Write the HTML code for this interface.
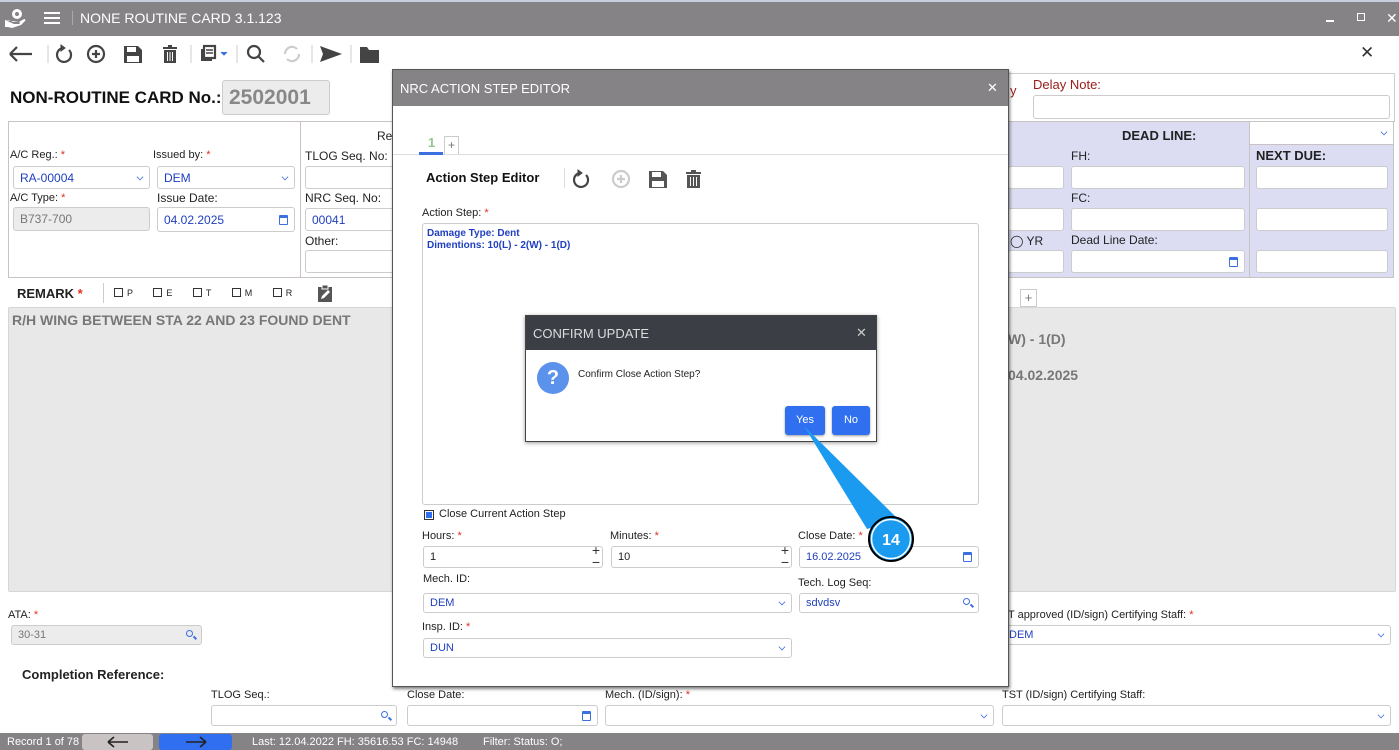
<!DOCTYPE html>
<html><head><meta charset="utf-8">
<style>
*{box-sizing:border-box;margin:0;padding:0}
body{width:1399px;height:750px;overflow:hidden;position:relative;background:#fff;font-family:"Liberation Sans",sans-serif;font-size:12px;color:#222}
.a{position:absolute}
.inp{position:absolute;background:#fff;border:1px solid #ccc;border-radius:3px;font-size:12px;color:#1f3fbf;padding-left:6px;display:flex;align-items:center}
.dis{background:#ececec;color:#777}
.lbl{position:absolute;font-size:12px;color:#222;white-space:nowrap}
.r{color:#e03020}
.chev{position:absolute;right:6px;top:50%;margin-top:-4px;width:6px;height:6px;border-right:1.5px solid #3c6fe0;border-bottom:1.5px solid #3c6fe0;transform:rotate(45deg) scale(.8)}
.cal{position:absolute;right:6px;top:50%;margin-top:-5px;width:9px;height:10px;border:1.5px solid #3c6fe0;border-top-width:3px;border-radius:1px}
.srch{position:absolute;right:8px;top:50%;margin-top:-5px;width:7px;height:7px;border:1.5px solid #3c6fe0;border-radius:50%}
.srch:after{content:"";position:absolute;width:1.5px;height:4px;background:#3c6fe0;right:-3px;bottom:-4px;transform:rotate(-45deg)}
.cb{display:inline-block;width:9px;height:9px;border:1px solid #333;margin-right:4px;vertical-align:-1px}
</style></head><body>

<!-- title bar -->
<div class="a" style="left:0;top:0;width:1399px;height:36px;background:#858385;border-top:2px solid #c8d0e0"></div>
<svg class="a" style="left:4px;top:8px" width="22" height="20" viewBox="0 0 22 20"><circle cx="13" cy="6" r="5" fill="#fff"/><circle cx="13" cy="6" r="2" fill="#858385"/><path d="M1 12h4l4 2h6c1 0 1 2 0 2h-5M1 12v7h3l4 1 9-3 4-4c1-1 0-2-1-2l-5 3" fill="#fff"/></svg>
<div class="a" style="left:44px;top:12px;width:16px;height:2px;background:#fff;box-shadow:0 5px 0 #fff,0 10px 0 #fff"></div>
<div class="a" style="left:72px;top:11px;width:1px;height:14px;background:#aaa"></div>
<div class="a" style="left:80px;top:10px;color:#fff;font-size:14px">NONE ROUTINE CARD 3.1.123</div>
<div class="a" style="left:1326px;top:20px;width:8px;height:2px;background:#fff"></div>
<div class="a" style="left:1357px;top:13px;width:8px;height:8px;border:1.5px solid #fff"></div>
<div class="a" style="left:1386px;top:10px;color:#fff;font-size:14px">✕</div>

<!-- toolbar -->
<svg class="a" style="left:8px;top:42px" width="380" height="24" viewBox="0 0 380 24" fill="none" stroke="#444" stroke-width="2.2">
<path d="M2 12h22M2 12l7-7M2 12l7 7"/>
<line x1="40" y1="3" x2="40" y2="21" stroke="#ccc" stroke-width="1"/>
<path d="M55 6a7 7 0 1 0 6 2" /><path d="M53 3l4 3-4 3z" fill="#444" stroke-width="1"/>
<circle cx="88" cy="12" r="8"/><path d="M84 12h8M88 8v8"/>
<path d="M116 4h14l4 4v13h-18z" fill="#444" stroke="none"/><rect x="119" y="5" width="9" height="5" fill="#fff" stroke="none"/><rect x="119" y="14" width="12" height="6" fill="#fff" stroke="none"/>
<g stroke="none" fill="#444"><rect x="155" y="5" width="14" height="2"/><rect x="160" y="3" width="4" height="2"/><path d="M156 8h12v13h-12z"/></g><path d="M159.5 10v9M162 10v9M164.5 10v9" stroke="#fff" stroke-width="1"/>
<line x1="183" y1="3" x2="183" y2="21" stroke="#ccc" stroke-width="1"/>
<rect x="193" y="7" width="11" height="12" fill="#444" stroke="none"/><rect x="196" y="4" width="11" height="12" fill="#fff"/><path d="M198 8h7M198 11h7" stroke-width="1.5"/>
<path d="M213 10l3 3 3-3" fill="#3c6fe0" stroke="#3c6fe0" stroke-width="1"/>
<line x1="229" y1="3" x2="229" y2="21" stroke="#ccc" stroke-width="1"/>
<circle cx="246" cy="10" r="6"/><path d="M250 14l6 6"/>
<path d="M277 12a7 7 0 0 1 12-5M291 12a7 7 0 0 1-12 5" stroke="#ccc"/>
<line x1="304" y1="3" x2="304" y2="21" stroke="#ccc" stroke-width="1"/>
<path d="M312 4l22 8-22 8 3-8z" fill="#444" stroke="none"/>
<line x1="343" y1="3" x2="343" y2="21" stroke="#ccc" stroke-width="1"/>
<path d="M352 5h7l2 3h10v13h-19z" fill="#444" stroke="none"/>
</svg>
<div class="a" style="left:1360px;top:43px;font-size:17px;color:#333">✕</div>

<!-- card no -->
<div class="a" style="left:10px;top:88px;font-size:17px;font-weight:bold;color:#111">NON-ROUTINE CARD No.: <span class="r">*</span></div>
<div class="inp dis" style="left:222px;top:80px;width:108px;height:35px;font-size:21px;font-weight:bold;color:#888">2502001</div>

<!-- delay note -->
<div class="a" style="left:1008px;top:73px;width:387px;height:49px;border:1px solid #ccc;border-left:none"></div>
<div class="a" style="left:1033px;top:77px;color:#9b1a1a;font-size:13px">Delay Note:</div>
<div class="a" style="left:1010px;top:83px;color:#9b1a1a;font-size:13px">y</div>
<div class="inp" style="left:1033px;top:95px;width:357px;height:24px"></div>

<!-- form box -->
<div class="a" style="left:8px;top:121px;width:1386px;height:157px;border:1px solid #c8c2c2"></div>
<div class="a" style="left:300px;top:122px;width:1px;height:155px;background:#c8c2c2"></div>
<div class="lbl" style="left:10px;top:149px;font-size:11px">A/C Reg.: <span class="r">*</span></div>
<div class="lbl" style="left:153px;top:149px;font-size:11px">Issued by: <span class="r">*</span></div>
<div class="inp" style="left:13px;top:166px;width:137px;height:23px">RA-00004<i class="chev"></i></div>
<div class="inp" style="left:157px;top:166px;width:138px;height:23px">DEM<i class="chev"></i></div>
<div class="lbl" style="left:10px;top:192px;font-size:11px">A/C Type: <span class="r">*</span></div>
<div class="lbl" style="left:157px;top:191px">Issue Date:</div>
<div class="inp dis" style="left:13px;top:207px;width:137px;height:24px">B737-700</div>
<div class="inp" style="left:157px;top:207px;width:138px;height:25px">04.02.2025<i class="cal"></i></div>
<div class="lbl" style="left:377px;top:129px">Re</div>
<div class="lbl" style="left:305px;top:149px">TLOG Seq. No:</div>
<div class="inp" style="left:305px;top:166px;width:90px;height:23px"></div>
<div class="lbl" style="left:305px;top:191px">NRC Seq. No:</div>
<div class="inp" style="left:305px;top:208px;width:90px;height:23px">00041</div>
<div class="lbl" style="left:305px;top:234px">Other:</div>
<div class="inp" style="left:305px;top:250px;width:90px;height:23px"></div>

<!-- deadline lavender -->
<div class="a" style="left:1008px;top:122px;width:385px;height:155px;background:#dcdcf3"></div>
<div class="a" style="left:1249px;top:122px;width:1px;height:155px;background:#c8c2c2"></div>
<div class="a" style="left:1250px;top:122px;width:143px;height:23px;background:#fff;border-bottom:1px solid #c8c2c2"><i class="chev"></i></div>
<div class="a" style="left:1122px;top:128px;font-weight:bold;font-size:13px">DEAD LINE:</div>
<div class="a" style="left:1256px;top:148px;font-weight:bold;font-size:13px">NEXT DUE:</div>
<div class="lbl" style="left:1071px;top:149px">FH:</div>
<div class="lbl" style="left:1071px;top:191px">FC:</div>
<div class="lbl" style="left:1071px;top:233px">Dead Line Date:</div>
<div class="lbl" style="left:1010px;top:234px">◯ YR</div>
<div class="inp" style="left:1008px;top:166px;width:56px;height:23px;border-left:none"></div>
<div class="inp" style="left:1008px;top:208px;width:56px;height:23px;border-left:none"></div>
<div class="inp" style="left:1008px;top:250px;width:56px;height:23px;border-left:none"></div>
<div class="inp" style="left:1071px;top:166px;width:174px;height:23px"></div>
<div class="inp" style="left:1071px;top:208px;width:174px;height:23px"></div>
<div class="inp" style="left:1071px;top:250px;width:174px;height:23px"><i class="cal"></i></div>
<div class="inp" style="left:1256px;top:166px;width:132px;height:23px"></div>
<div class="inp" style="left:1256px;top:208px;width:132px;height:23px"></div>
<div class="inp" style="left:1256px;top:250px;width:132px;height:23px"></div>

<!-- remark -->
<div class="a" style="left:17px;top:286px;font-weight:bold;font-size:13px">REMARK <span class="r">*</span></div>
<div class="a" style="left:103px;top:283px;width:1px;height:20px;background:#ccc"></div>
<div class="a" style="left:114px;top:288px;font-size:9px;word-spacing:18px"><i class="cb"></i>P <i class="cb"></i>E <i class="cb"></i>T <i class="cb"></i>M <i class="cb"></i>R</div>
<svg class="a" style="left:317px;top:284px" width="16" height="18" viewBox="0 0 16 18"><rect x="1" y="3" width="14" height="15" fill="#555"/><rect x="5" y="1" width="6" height="4" fill="#555" stroke="#fff"/><path d="M4 15l1-3 6-6 2 2-6 6z" fill="#fff"/></svg>
<div class="a" style="left:1020px;top:289px;width:17px;height:18px;border:1px solid #ccc;text-align:center;color:#777;font-size:13px;line-height:16px">+</div>
<div class="a" style="left:8px;top:307px;width:1388px;height:285px;background:#e8e8e8;border:1px solid #d6d6d6;border-radius:2px"></div>
<div class="a" style="left:12px;top:312px;font-weight:bold;font-size:14px;color:#777">R/H WING BETWEEN STA 22 AND 23 FOUND DENT</div>
<div class="a" style="left:1008px;top:331px;font-weight:bold;font-size:14px;color:#777">W) - 1(D)</div>
<div class="a" style="left:1008px;top:367px;font-weight:bold;font-size:14px;color:#777">04.02.2025</div>

<!-- lower -->
<div class="lbl" style="left:8px;top:609px;font-size:11px">ATA: <span class="r">*</span></div>
<div class="inp dis" style="left:11px;top:625px;width:191px;height:20px;font-size:11px">30-31<i class="srch"></i></div>
<div class="lbl" style="left:1008px;top:609px;font-size:11px">T approved (ID/sign) Certifying Staff: <span class="r">*</span></div>
<div class="inp" style="left:1002px;top:625px;width:389px;height:20px;font-size:11px;padding-left:6px">DEM<i class="chev"></i></div>
<div class="a" style="left:22px;top:667px;font-weight:bold;font-size:13px">Completion Reference:</div>
<div class="lbl" style="left:211px;top:689px;font-size:11px">TLOG Seq.:</div>
<div class="lbl" style="left:407px;top:689px;font-size:11px">Close Date:</div>
<div class="lbl" style="left:605px;top:689px;font-size:11px">Mech. (ID/sign): <span class="r">*</span></div>
<div class="lbl" style="left:1002px;top:689px;font-size:11px">TST (ID/sign) Certifying Staff:</div>
<div class="inp" style="left:211px;top:705px;width:186px;height:21px"><i class="srch"></i></div>
<div class="inp" style="left:407px;top:705px;width:191px;height:21px"><i class="cal"></i></div>
<div class="inp" style="left:605px;top:705px;width:389px;height:21px"><i class="chev"></i></div>
<div class="inp" style="left:1002px;top:705px;width:389px;height:21px"><i class="chev"></i></div>

<!-- status bar -->
<div class="a" style="left:0;top:733px;width:1399px;height:17px;background:#858385"></div>
<div class="a" style="left:7px;top:736px;color:#fff;font-size:11px">Record 1 of 78</div>
<div class="a" style="left:82px;top:734px;width:71px;height:16px;background:#c9c3c3;border-radius:3px"></div>
<div class="a" style="left:159px;top:734px;width:73px;height:16px;background:#2f6ff0;border-radius:3px"></div>
<svg class="a" style="left:82px;top:734px" width="150" height="16" viewBox="0 0 150 16" fill="none" stroke="#222" stroke-width="1.6"><path d="M26 8h20M26 8l6-5M26 8l6 5"/><path d="M104 8h20M124 8l-6-5M124 8l-6 5"/></svg>
<div class="a" style="left:252px;top:736px;color:#fff;font-size:11px">Last: 12.04.2022 FH: 35616.53 FC: 14948</div>
<div class="a" style="left:483px;top:736px;color:#fff;font-size:11px">Filter: Status: O;</div>

<!-- modal -->
<div class="a" style="left:392px;top:69px;width:617px;height:618px;background:#fff;border:1px solid #555;box-shadow:1px 2px 3px rgba(0,0,0,.5)"></div>
<div class="a" style="left:393px;top:70px;width:615px;height:36px;background:#858385"></div>
<div class="a" style="left:400px;top:81px;color:#fff;font-size:13px">NRC ACTION STEP EDITOR</div>
<div class="a" style="left:987px;top:80px;color:#fff;font-size:13px">✕</div>
<div class="a" style="left:393px;top:154px;width:615px;height:1px;background:#ddd"></div>
<div class="a" style="left:428px;top:135px;color:#8fc98f;font-size:13px;font-weight:bold">1</div>
<div class="a" style="left:419px;top:152px;width:24px;height:3px;background:#3c6fe0"></div>
<div class="a" style="left:444px;top:136px;width:15px;height:18px;border:1px solid #ccc;border-bottom:none;text-align:center;color:#777;font-size:12px;line-height:16px">+</div>
<div class="a" style="left:426px;top:170px;font-weight:bold;font-size:13px;color:#111">Action Step Editor</div>
<div class="a" style="left:564px;top:168px;width:1px;height:20px;background:#ddd"></div>
<svg class="a" style="left:573px;top:168px" width="135" height="22" viewBox="0 0 135 22" fill="none" stroke-width="2.2">
<path d="M7 5a7 7 0 1 0 6 2" stroke="#444"/><path d="M5 2l4 3-4 3z" fill="#444" stroke="#444" stroke-width="1"/>
<circle cx="48" cy="11" r="8" stroke="#ccc"/><path d="M44 11h8M48 7v8" stroke="#ccc"/>
<path d="M76 3h14l4 4v13h-18z" fill="#555"/><rect x="79" y="4" width="9" height="5" fill="#fff"/><rect x="79" y="13" width="12" height="6" fill="#fff"/>
<g fill="#555"><rect x="113" y="4" width="15" height="2"/><rect x="118" y="2" width="5" height="2"/><path d="M114 7h13v13h-13z"/></g><path d="M117.5 9v9M120.5 9v9M123.5 9v9" stroke="#fff" stroke-width="1"/>
</svg>
<div class="lbl" style="left:422px;top:207px;font-size:11px">Action Step: <span class="r">*</span></div>
<div class="a" style="left:422px;top:223px;width:557px;height:282px;border:1px solid #ccc;border-radius:3px"></div>
<div class="a" style="left:427px;top:228px;color:#1f3fbf;font-size:10px;font-weight:bold;line-height:12px">Damage Type: Dent<br>Dimentions: 10(L) - 2(W) - 1(D)</div>
<div class="a" style="left:424px;top:510px;width:10px;height:10px;border:1px solid #333;background:#2f6ff0;box-shadow:inset 0 0 0 1px #fff"></div>
<div class="lbl" style="left:439px;top:508px;font-size:11px">Close Current Action Step</div>
<div class="lbl" style="left:422px;top:530px;font-size:11px">Hours: <span class="r">*</span></div>
<div class="lbl" style="left:610px;top:530px;font-size:11px">Minutes: <span class="r">*</span></div>
<div class="lbl" style="left:798px;top:530px;font-size:11px">Close Date: <span class="r">*</span></div>
<div class="inp" style="left:423px;top:546px;width:180px;height:22px;color:#222;font-size:11px">1<span style="position:absolute;right:2px;top:-3px;font-size:14px;line-height:12px;color:#333">+<br>−</span></div>
<div class="inp" style="left:611px;top:546px;width:181px;height:22px;color:#222;font-size:11px">10<span style="position:absolute;right:2px;top:-3px;font-size:14px;line-height:12px;color:#333">+<br>−</span></div>
<div class="inp" style="left:799px;top:546px;width:180px;height:22px;font-size:11px">16.02.2025<i class="cal"></i></div>
<div class="lbl" style="left:423px;top:573px;font-size:11px">Mech. ID:</div>
<div class="lbl" style="left:798px;top:577px;font-size:11px">Tech. Log Seq:</div>
<div class="inp" style="left:423px;top:593px;width:369px;height:20px;font-size:11px">DEM<i class="chev"></i></div>
<div class="inp" style="left:799px;top:593px;width:180px;height:20px;font-size:11px">sdvdsv<i class="srch"></i></div>
<div class="lbl" style="left:422px;top:621px;font-size:11px">Insp. ID: <span class="r">*</span></div>
<div class="inp" style="left:423px;top:638px;width:369px;height:20px;font-size:11px">DUN<i class="chev"></i></div>

<!-- confirm -->
<div class="a" style="left:525px;top:315px;width:352px;height:127px;background:#fff;border:1px solid #444;box-shadow:0 1px 4px rgba(0,0,0,.4)"></div>
<div class="a" style="left:526px;top:316px;width:350px;height:34px;background:#3b3e45"></div>
<div class="a" style="left:533px;top:326px;color:#ddd;font-size:13px">CONFIRM UPDATE</div>
<div class="a" style="left:856px;top:325px;color:#ccc;font-size:13px">✕</div>
<div class="a" style="left:537px;top:362px;width:32px;height:32px;border-radius:50%;background:#5b93ec;color:#fff;font-weight:bold;font-size:20px;text-align:center;line-height:32px">?</div>
<div class="a" style="left:578px;top:369px;font-size:10px">Confirm Close Action Step?</div>
<div class="a" style="left:785px;top:406px;width:40px;height:29px;background:#2f6ff0;border-radius:3px;color:#fff;font-size:11px;text-align:center;line-height:29px;box-shadow:0 1px 2px rgba(0,0,0,.4)">Yes</div>
<div class="a" style="left:832px;top:406px;width:38px;height:29px;background:#2f6ff0;border-radius:3px;color:#fff;font-size:11px;text-align:center;line-height:29px;box-shadow:0 1px 2px rgba(0,0,0,.4)">No</div>

<!-- callout -->
<svg class="a" style="left:790px;top:420px" width="140" height="150" viewBox="0 0 140 150">
<path d="M14 6L77 109L109 100Z" fill="#1a9bf0"/>
<circle cx="101" cy="119" r="22" fill="#1a9bf0" stroke="#000" stroke-width="2"/>
<circle cx="101" cy="119" r="19.5" fill="none" stroke="#fff" stroke-width="1.5"/>
<text x="101" y="125" text-anchor="middle" fill="#fff" font-family="Liberation Sans" font-weight="bold" font-size="16">14</text>
</svg>
</body></html>
